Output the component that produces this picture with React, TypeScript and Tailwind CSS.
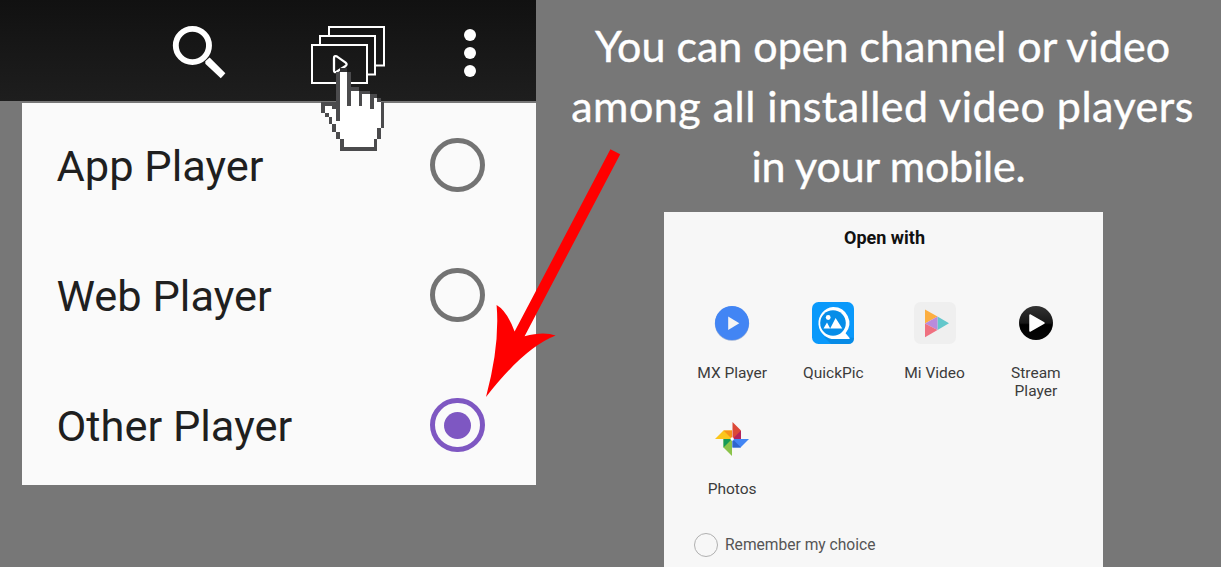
import type { ReactNode } from "react";

function SearchIcon() {
  return (
    <svg className="block h-[54px] w-[54px] shrink-0" viewBox="172 25 54 54" fill="none" stroke="#fff">
      <circle cx="192.4" cy="45.5" r="16.6" strokeWidth="5.9" />
      <path d="M205.3 61.2L209.6 57.6L225.4 73.2L220.8 78.2L205.3 63.8Z" fill="#fff" stroke="none" />
    </svg>
  );
}

function PlaylistIcon() {
  return (
    <svg className="block h-[60px] w-[76px] shrink-0" viewBox="310 25 76 60" fill="none" stroke="#fff" strokeWidth="2">
      <path d="M329 35V27H384V65.5H376" />
      <path d="M320 44V36H375V74.5H367" />
      <rect x="312" y="45" width="55" height="38" />
      <path
        d="M334 58.2V70.2Q334 72.8 336.6 71.8L345.6 66Q347.6 64.2 345.6 62.6L336.8 56.4Q334 55.2 334 58.2Z"
        strokeWidth="2.3"
      />
    </svg>
  );
}

function HandPointer() {
  return (
    <svg
      className="pointer-events-none absolute left-[320.7px] top-[68.3px] h-[82.7px] w-[63.8px]"
      viewBox="0 0 17 22"
      shapeRendering="crispEdges"
    >
      <path
        fill="#fff"
        d="M5 1H7V10H8V6H10V10H11V7H13V11H14V8H15V9H16V16H15V19H14V21H6V19H5V17H4V15H3V13H2V12H1V10H3V11H4V14H5Z"
      />
      <path
        fill="#4b4b4d"
        d="M5 1H4V14H5ZM7 1H8V10H7ZM8 5H10V6H8ZM10 6H11V10H10ZM11 6H13V7H11ZM13 7H14V11H13ZM14 7H15V8H14ZM15 8H16V9H15ZM16 9H17V16H16ZM15 16H16V19H15ZM14 19H15V22H14ZM5 21H14V22H5ZM5 19H6V21H5ZM4 17H5V19H4ZM3 15H4V17H3ZM2 13H3V15H2ZM1 12H2V13H1ZM0 9H1V12H0ZM1 9H4V10H1ZM3 10H4V11H3Z"
      />
      <path fill="#333335" d="M5 0H7V1H5Z" />
    </svg>
  );
}

function Arrow() {
  return (
    <svg className="pointer-events-none absolute left-[480px] top-[140px] h-[265px] w-[150px]" viewBox="480 140 150 265">
      <path
        fill="#f00"
        d="M610.4 149.3L620.2 154.2L524.6 336.2Q544 331 555.6 335.6Q524 348 486 397Q500 345 496.6 305Q507 311 514.6 331.6Z"
      />
    </svg>
  );
}

function Option({ label, selected = false }: { label: string; selected?: boolean }) {
  return (
    <div className="flex h-[54px] items-center justify-between pl-[34.5px] pr-[51px]">
      <span className="relative top-[2px] whitespace-nowrap text-[43.4px] leading-none">{label}</span>
      <span
        className={
          selected
            ? "flex h-[54px] w-[55px] items-center justify-center rounded-full border-[5px] border-[#7e57c2]"
            : "h-[54px] w-[55px] rounded-full border-[5px] border-[#737373]"
        }
      >
        {selected && <span className="h-[27px] w-[27px] rounded-full bg-[#7e57c2]" />}
      </span>
    </div>
  );
}

function MxIcon() {
  return (
    <svg className="h-[42px] w-[42px]" viewBox="0 0 42 42">
      <circle cx="21" cy="21.6" r="17.2" fill="#3b68b8" opacity=".5" />
      <circle cx="21" cy="21" r="17" fill="#4285f4" />
      <path d="M17.2 14.5V28L28.3 21.3Z" fill="#f4f4f4" />
    </svg>
  );
}

function QuickPicIcon() {
  return (
    <svg className="h-[42px] w-[42px]" viewBox="0 0 42 42">
      <rect width="42" height="42" rx="6.5" fill="#0a99fb" />
      <path d="M12 35L19 42H36Q42 42 42 36L36 35Z" fill="#078be6" />
      <path d="M21 5A16 16 0 1 0 24 37H37.6V36L33.6 31.2A16 16 0 0 0 21 5Z" fill="#fff" />
      <circle cx="21" cy="21" r="12.8" fill="#068de8" />
      <circle cx="16.2" cy="15.5" r="2.4" fill="#fff" />
      <path d="M11.5 26.5L15 20.6L18.2 26.5ZM18.2 26.5L23.6 16L30.3 26.5Z" fill="#fff" />
    </svg>
  );
}

function MiVideoIcon() {
  return (
    <svg className="h-[42px] w-[42px]" viewBox="0 0 42 42">
      <rect width="42" height="42" rx="6.5" fill="#efefef" />
      <path d="M11 7.5V21.5L23.5 14.5Z" fill="#fcae40" />
      <path d="M23.5 14.5V28L35 21.3Z" fill="#63c7cb" />
      <path d="M11 21.5L23.5 14.5V28Z" fill="#b98bdc" />
      <path d="M11 21.5V35.3L23.5 28Z" fill="#ef7080" />
    </svg>
  );
}

function StreamIcon() {
  return (
    <svg className="h-[42px] w-[42px]" viewBox="0 0 42 42">
      <defs>
        <linearGradient id="disc" x1="0" y1="0" x2="0" y2="1">
          <stop offset="0" stopColor="#333" />
          <stop offset=".5" stopColor="#171717" />
          <stop offset=".55" stopColor="#000" />
          <stop offset="1" stopColor="#060606" />
        </linearGradient>
      </defs>
      <circle cx="21" cy="21" r="17" fill="url(#disc)" />
      <path d="M15 13V29L29 21Z" fill="#fff" stroke="#fff" strokeWidth="1.5" strokeLinejoin="round" />
    </svg>
  );
}

function PhotosIcon() {
  return (
    <svg className="h-[42px] w-[42px]" viewBox="0 0 42 42">
      <path d="M21.5 4L30 12.5V21H21.5Z" fill="#dc4838" />
      <path d="M30 12.5V21H21.5Z" fill="#b4235c" />
      <path d="M38 21L29.5 29.5H21.5V21Z" fill="#4285f4" />
      <path d="M21.5 21L30 29.5H21.5Z" fill="#2f65cc" />
      <path d="M21 38L12.5 29.5V21H21Z" fill="#8bc34a" />
      <path d="M12.5 29.5V21H21Z" fill="#159a57" />
      <path d="M4 21L12.5 12.5H21V21Z" fill="#fcc61c" />
      <path d="M12.5 12.5H21V21Z" fill="#f79419" />
      <circle cx="21.2" cy="21" r="1.7" fill="#fff" />
    </svg>
  );
}

function AppTile({ icon, children }: { icon: ReactNode; children: ReactNode }) {
  return (
    <div className="flex h-[116px] flex-col items-center">
      {icon}
      <span className="mt-5 w-20 text-center text-[15.5px] leading-[18px] text-[#3c3c3c]">{children}</span>
    </div>
  );
}

export default function App() {
  return (
    <main className="relative flex h-[567px] w-[1221px] overflow-hidden bg-[#777] font-[Roboto,sans-serif]">
      <section className="w-[536px] shrink-0">
        <header className="flex h-[101px] items-start bg-linear-to-b from-[#111] to-[#1e1e1e] pl-[172px] pt-[25px]">
          <SearchIcon />
          <div className="ml-[84px]">
            <PlaylistIcon />
          </div>
          <div className="ml-[78px] mt-1 flex flex-col gap-[6px]">
            <span className="h-3 w-3 rounded-full bg-white" />
            <span className="h-3 w-3 rounded-full bg-white" />
            <span className="h-3 w-3 rounded-full bg-white" />
          </div>
        </header>
        <div className="ml-[22px] mt-[2px] flex h-[382px] flex-col gap-[76px] bg-[#fafafa] pt-[35px] text-[#1f1f1f]">
          <Option label="App Player" />
          <Option label="Web Player" />
          <Option label="Other Player" selected />
        </div>
      </section>

      <section className="flex flex-1 flex-col">
        <h1 className="flex h-[212px] flex-col items-center pl-[8px] pt-[16px] font-[Lato,sans-serif] text-[43px] leading-[60px] text-white [-webkit-text-stroke:0.4px_#fff]">
          <span className="whitespace-nowrap tracking-[0px]">You can open channel or video</span>
          <span className="whitespace-nowrap tracking-[0.5px]">among all installed video players</span>
          <span className="whitespace-nowrap pl-[12px] tracking-[-0.2px]">in your mobile.</span>
        </h1>
        <div className="ml-[128px] h-[355px] w-[439px] bg-[#f7f7f7]">
          <h2 className="pl-[2px] pt-[15px] text-center text-[18px] font-bold leading-[21px] text-[#111]">Open with</h2>
          <div className="mt-[54px] grid grid-cols-4 pl-[17.5px] pr-[16.5px]">
            <AppTile icon={<MxIcon />}>MX Player</AppTile>
            <AppTile icon={<QuickPicIcon />}>QuickPic</AppTile>
            <AppTile icon={<MiVideoIcon />}>Mi Video</AppTile>
            <AppTile icon={<StreamIcon />}>Stream Player</AppTile>
            <AppTile icon={<PhotosIcon />}>Photos</AppTile>
          </div>
          <div className="-mt-[2px] flex items-center gap-[7px] pl-[30px]">
            <span className="h-6 w-6 rounded-full border border-[#b0b0b0]" />
            <span className="pt-px text-[15.6px] leading-6 text-[#555]">Remember my choice</span>
          </div>
        </div>
      </section>

      <HandPointer />
      <Arrow />
    </main>
  );
}
